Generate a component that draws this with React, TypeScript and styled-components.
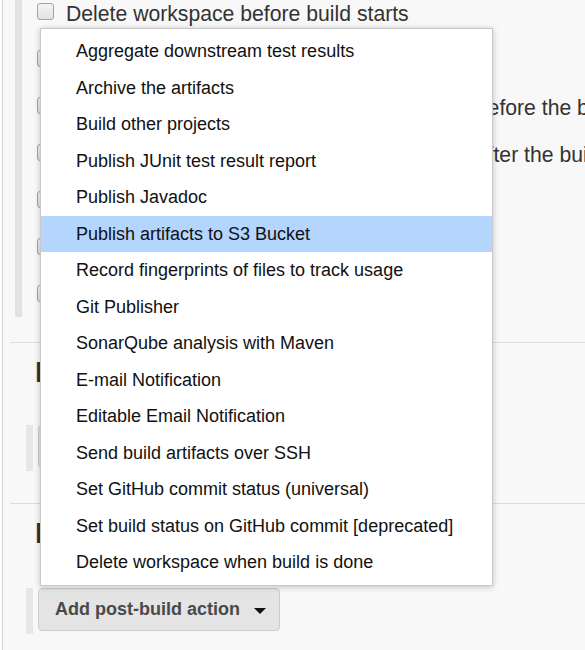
import React from "react";
import styled, { createGlobalStyle } from "styled-components";

const GlobalStyle = createGlobalStyle`
  html, body {
    margin: 0;
    padding: 0;
    background: #fdfdfd;
  }
  body {
    font-family: "Liberation Sans", Arial, sans-serif;
    color: #333;
  }
`;

const envOptions = [
  "Delete workspace before build starts",
  "Abort the build if it's stuck",
  "Send files or execute commands over SSH before the build starts",
  "Send files or execute commands over SSH after the build runs",
  "Add timestamps to the Console Output",
  "Provide Configuration files",
  "Use secret text(s) or file(s)",
];

const menuItems = [
  "Aggregate downstream test results",
  "Archive the artifacts",
  "Build other projects",
  "Publish JUnit test result report",
  "Publish Javadoc",
  "Publish artifacts to S3 Bucket",
  "Record fingerprints of files to track usage",
  "Git Publisher",
  "SonarQube analysis with Maven",
  "E-mail Notification",
  "Editable Email Notification",
  "Send build artifacts over SSH",
  "Set GitHub commit status (universal)",
  "Set build status on GitHub commit [deprecated]",
  "Delete workspace when build is done",
];

const Page = styled.div`
  position: relative;
  margin-left: 2px;
  height: 650px;
  overflow: hidden;
  background: #f8f8f8;
  border-left: 1px solid #d2d2d2;
`;

const OptionBlock = styled.div`
  margin: -12px 0 0 12px;
  border-left: 7px solid #e2e2e2;
  padding-left: 15px;
`;

const OptionRow = styled.label`
  display: flex;
  align-items: center;
  height: 47px;
  white-space: nowrap;
  font-size: 21.2px;
  color: #333;
`;

const OptionText = styled.span`
  padding: 4px 0 0 2px;
`;

const Checkbox = styled.span`
  flex: none;
  width: 15px;
  height: 15px;
  margin-right: 10px;
  border: 1px solid #a3a3a3;
  border-radius: 3px;
  background: linear-gradient(#f4f4f4, #e2e2e2);
`;

const Divider = styled.div<{ $top: number }>`
  margin: ${(p) => p.$top}px 0 0 7px;
  border-top: 1px solid #dcdcdc;
`;

const Heading = styled.h2<{ $top: number }>`
  margin: ${(p) => p.$top}px 0 0 32px;
  font-size: 29px;
  line-height: 1;
  font-weight: bold;
  color: #333;
  white-space: nowrap;
`;

const ButtonRow = styled.div<{ $top: number }>`
  display: flex;
  align-items: flex-start;
  margin: ${(p) => p.$top}px 0 0 23px;
  height: 46px;
  border-left: 7px solid #e6e6e6;
  padding-left: 5px;
`;

const DropButton = styled.button`
  display: flex;
  align-items: center;
  gap: 14px;
  height: 43px;
  padding: 0 13px 0 16px;
  border: 1px solid #cdcdcd;
  border-radius: 4px;
  background: #e4e4e4;
  font-family: "Liberation Sans", Arial, sans-serif;
  font-size: 18px;
  font-weight: bold;
  color: #4a4a4a;
  white-space: nowrap;
`;

const Caret = styled.span`
  width: 0;
  height: 0;
  border-left: 6px solid transparent;
  border-right: 6px solid transparent;
  border-top: 6px solid #111;
  margin-top: 2px;
`;

const Menu = styled.ul`
  position: absolute;
  left: 37px;
  top: 28px;
  width: 451px;
  margin: 0;
  padding: 4px 0;
  list-style: none;
  background: #fff;
  border: 1px solid #c9c9c9;
  box-shadow: 0 1px 6px rgba(0, 0, 0, 0.22);
`;

const MenuItem = styled.li<{ $active?: boolean }>`
  height: 36.5px;
  line-height: 36.5px;
  padding-left: 35px;
  font-size: 18px;
  color: #111;
  white-space: nowrap;
  background: ${(p) => (p.$active ? "#b4d5fe" : "transparent")};
`;

export default function App() {
  return (
    <>
      <GlobalStyle />
      <Page>
        <OptionBlock>
          {envOptions.map((o) => (
            <OptionRow key={o}>
              <Checkbox />
              <OptionText>{o}</OptionText>
            </OptionRow>
          ))}
        </OptionBlock>
        <Divider $top={25} />
        <Heading $top={15}>Build</Heading>
        <ButtonRow $top={38}>
          <DropButton>
            Add build step <Caret />
          </DropButton>
        </ButtonRow>
        <Divider $top={32} />
        <Heading $top={15}>Post-build Actions</Heading>
        <ButtonRow $top={40}>
          <DropButton>
            Add post-build action <Caret />
          </DropButton>
        </ButtonRow>
        <Menu>
          {menuItems.map((m) => (
            <MenuItem key={m} $active={m === "Publish artifacts to S3 Bucket"}>
              {m}
            </MenuItem>
          ))}
        </Menu>
      </Page>
    </>
  );
}
